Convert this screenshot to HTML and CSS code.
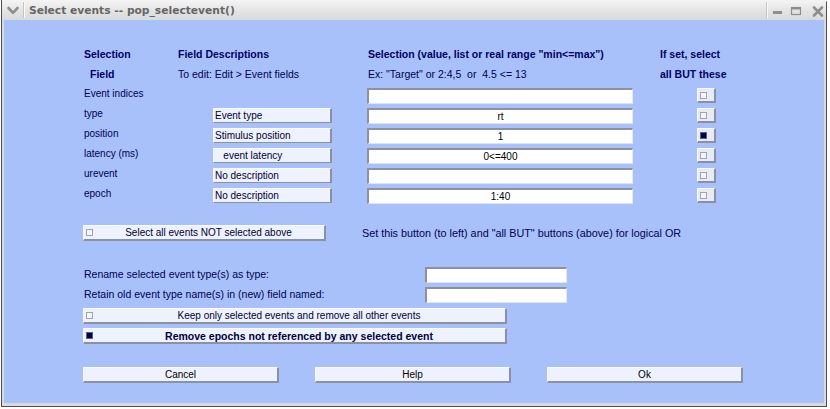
FILE: index.html
```html
<!DOCTYPE html>
<html>
<head>
<meta charset="utf-8">
<title>Select events -- pop_selectevent()</title>
<link rel="stylesheet" href="styles.css">
</head>
<body>
<div class="window">
  <div class="titlebar">
    <svg class="tb-menu" width="20" height="20" viewBox="0 0 20 20"><polyline points="5.5,8 10,12.8 14.5,8" fill="none" stroke="#8e8e8e" stroke-width="2.6" stroke-linecap="round" stroke-linejoin="round"/></svg>
    <span class="tb-sep"></span>
    <span class="tb-title">Select events -- pop_selectevent()</span>
    <span class="tb-spacer"></span>
    <span class="tb-sep"></span>
    <svg class="tb-ctrls" width="58" height="20" viewBox="0 0 58 20">
      <rect x="5" y="11" width="9" height="3" fill="#8e8e8e"/>
      <rect x="23.5" y="7.5" width="9" height="7" fill="none" stroke="#8e8e8e" stroke-width="1.2"/>
      <rect x="23" y="7" width="10" height="2.5" fill="#8e8e8e"/>
      <path d="M46 7.5 L54 15.5 M54 7.5 L46 15.5" stroke="#8e8e8e" stroke-width="2.6" stroke-linecap="round"/>
    </svg>
  </div>
  <div class="frame">
    <div class="content">
      <div class="table">
        <div class="h">Selection</div>
        <div class="h">Field Descriptions</div>
        <div class="h">Selection (value, list or real range "min&lt;=max")</div>
        <div></div>
        <div class="h">If set, select</div>

        <div class="h indent">Field</div>
        <div class="t">To edit: Edit &gt; Event fields</div>
        <div class="t">Ex: "Target" or 2:4,5&nbsp; or&nbsp; 4.5 &lt;= 13</div>
        <div></div>
        <div class="h">all BUT these</div>

        <div class="lbl">Event indices</div>
        <div></div>
        <div class="inp"></div>
        <div></div>
        <div class="cb"><span class="tick"></span></div>

        <div class="lbl">type</div>
        <div class="desc">Event type</div>
        <div class="inp">rt</div>
        <div></div>
        <div class="cb"><span class="tick"></span></div>

        <div class="lbl">position</div>
        <div class="desc">Stimulus position</div>
        <div class="inp">1</div>
        <div></div>
        <div class="cb"><span class="tick on"></span></div>

        <div class="lbl">latency (ms)</div>
        <div class="desc pre">   event latency</div>
        <div class="inp">0&lt;=400</div>
        <div></div>
        <div class="cb"><span class="tick"></span></div>

        <div class="lbl">urevent</div>
        <div class="desc">No description</div>
        <div class="inp"></div>
        <div></div>
        <div class="cb"><span class="tick"></span></div>

        <div class="lbl">epoch</div>
        <div class="desc">No description</div>
        <div class="inp">1:40</div>
        <div></div>
        <div class="cb"><span class="tick"></span></div>
      </div>

      <div class="selall-row">
        <div class="btn selall"><span class="tick"></span><span class="btn-text">Select all events NOT selected above</span></div>
        <div class="note">Set this button (to left) and "all BUT" buttons (above) for logical OR</div>
      </div>

      <div class="rename">
        <div class="lbl2">Rename selected event type(s) as type:</div>
        <div class="inp small"></div>
        <div class="lbl2">Retain old event type name(s) in (new) field named:</div>
        <div class="inp small"></div>
      </div>

      <div class="btn wide first"><span class="tick"></span><span class="btn-text">Keep only selected events and remove all other events</span></div>
      <div class="btn wide second"><span class="tick on"></span><span class="btn-text bold">Remove epochs not referenced by any selected event</span></div>

      <div class="actions">
        <div class="btn action"><span class="btn-text">Cancel</span></div>
        <div class="btn action"><span class="btn-text">Help</span></div>
        <div class="btn action"><span class="btn-text">Ok</span></div>
      </div>
    </div>
  </div>
</div>
</body>
</html>
```
FILE: styles.css
```css
html, body {
  margin: 0;
  padding: 0;
  background: #ffffff;
}
body {
  width: 830px;
  height: 409px;
  overflow: hidden;
  font-family: "Liberation Sans", Arial, sans-serif;
}
.window {
  margin-left: 1px;
  width: 826px;
  height: 407px;
  box-sizing: border-box;
  border: 1px solid #4e4e4e;
  border-top: none;
  border-top-right-radius: 3px;
  background: #dadada;
  display: flex;
  flex-direction: column;
}
.titlebar {
  height: 20px;
  flex: none;
  display: flex;
  align-items: center;
  background: linear-gradient(#f4f4f4, #e2e2e2 60%, #dadada);
}
.tb-menu {
  flex: none;
  margin-left: 1px;
}
.tb-sep {
  flex: none;
  width: 1px;
  height: 16px;
  background: #c4c4c4;
  border-right: 1px solid #fafafa;
}
.tb-title {
  margin-left: 4px;
  font-family: "DejaVu Sans", sans-serif;
  font-weight: bold;
  font-size: 10.7px;
  color: #666666;
  white-space: nowrap;
}
.tb-spacer {
  flex: 1;
}
.tb-ctrls {
  flex: none;
}
.frame {
  flex: 1;
  padding: 0 2px 3px 2px;
  display: flex;
}
.content {
  flex: 1;
  background: #a8c1fb;
  padding: 28px 0 0 79px;
  display: flex;
  flex-direction: column;
  align-items: flex-start;
  color: #000055;
  font-size: 10px;
  line-height: 12px;
}
.table {
  display: grid;
  grid-template-columns: 94px 190px 266px 26px 80px;
  grid-auto-rows: 20px;
}
.h {
  font-weight: bold;
  font-size: 10.5px;
  line-height: 12px;
  color: #000066;
  padding-left: 1px;
  white-space: nowrap;
}
.h.indent {
  padding-left: 7px;
}
.t {
  white-space: nowrap;
  padding-left: 1px;
  font-size: 10.5px;
}
.lbl {
  padding-left: 1px;
  margin-top: 0;
  white-space: nowrap;
}
.desc {
  margin-left: 36px;
  width: 119px;
  height: 15px;
  box-sizing: border-box;
  background: #eef2fc;
  border-top: 1px solid #fbfcff;
  border-left: 1px solid #fbfcff;
  border-right: 2px solid #8b90a3;
  border-bottom: 1px solid #8b90a3;
  padding: 1px 0 0 1px;
  color: #000033;
  white-space: nowrap;
  overflow: hidden;
}
.desc.pre {
  white-space: pre;
}
.inp {
  height: 16px;
  box-sizing: border-box;
  background: #ffffff;
  border-top: 2px solid #8d909e;
  border-left: 2px solid #8d909e;
  border-right: 1px solid #e4e8f2;
  border-bottom: 1px solid #dfe3ee;
  text-align: center;
  padding-top: 1px;
  color: #000000;
}
.inp.small {
  width: 142px;
}
.cb {
  margin-left: 38px;
  width: 19px;
  height: 15px;
  box-sizing: border-box;
  background: #e7ebf5;
  border-top: 1px solid #fafbff;
  border-left: 1px solid #fafbff;
  border-right: 2px solid #8b90a3;
  border-bottom: 2px solid #8b90a3;
  display: flex;
  align-items: center;
  padding-left: 2px;
}
.tick {
  flex: none;
  width: 7px;
  height: 7px;
  box-sizing: border-box;
  border: 1px solid #9ea2b4;
  background: #f3f5fb;
}
.tick.on {
  background: #000050;
  border-color: #5b5f80;
}
.btn {
  height: 16px;
  box-sizing: border-box;
  background: #eef2fc;
  border-top: 1px solid #fbfcff;
  border-left: 1px solid #fbfcff;
  border-right: 2px solid #8b90a3;
  border-bottom: 2px solid #8b90a3;
  display: flex;
  align-items: center;
  padding-left: 2px;
  color: #000033;
}
.btn-text {
  flex: 1;
  text-align: center;
  white-space: nowrap;
}
.btn-text.bold {
  font-weight: bold;
  font-size: 10.5px;
  color: #000044;
}
.selall-row {
  display: flex;
  align-items: center;
  margin-top: 17px;
}
.btn.selall {
  width: 243px;
}
.note {
  margin-left: 36px;
  white-space: nowrap;
  margin-top: -1px;
  font-size: 10.8px;
}
.rename {
  display: grid;
  grid-template-columns: 342px 142px;
  grid-auto-rows: 20px;
  margin-top: 26px;
}
.lbl2 {
  padding-left: 1px;
  margin-top: 1px;
  white-space: nowrap;
  font-size: 10.5px;
}
.btn.wide {
  width: 424px;
}
.btn.wide.first {
  margin-top: 1px;
}
.btn.wide.second {
  margin-top: 4px;
}
.actions {
  display: flex;
  gap: 36px;
  margin-top: 23px;
}
.btn.action {
  width: 196px;
  padding-left: 0;
  color: #000000;
}
```
